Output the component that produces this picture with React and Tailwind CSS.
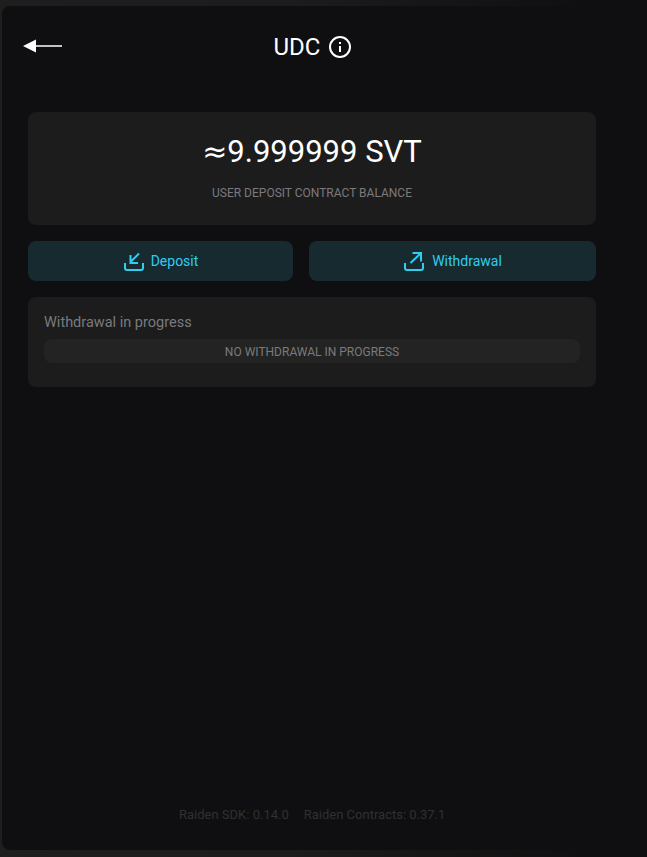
export default function App() {
  return (
    <div className="w-[647px] h-[857px] bg-[linear-gradient(to_right,#1e1e1e_0%,#1c1c1c_45%,#0f0f11_92%)] pt-[6px] pb-[7px] pl-[2px] overflow-hidden" style={{ fontFamily: "Roboto, sans-serif" }}>
      <div className="h-full bg-[#0f0f11] rounded-[8px] flex flex-col relative">
        <div className="h-[80px] relative flex justify-center items-center shrink-0 w-[622px]">
          <svg className="absolute left-[21px] top-[33px]" width="40" height="14" viewBox="0 0 40 14">
            <path d="M0 7 L13 0.5 V6.2 H39 V7.8 H13 V13.5 Z" fill="#fff" />
          </svg>
          <div className="flex items-center mt-[1px]">
            <span className="text-white text-[24px] leading-[28px] font-normal">UDC</span>
            <svg className="ml-[8px]" width="24" height="24" viewBox="0 0 24 24" fill="none">
              <circle cx="12" cy="12" r="10" stroke="#fff" strokeWidth="2" />
              <rect x="11" y="11" width="2" height="6" fill="#fff" />
              <rect x="11" y="7" width="2" height="2" fill="#fff" />
            </svg>
          </div>
        </div>
        <div className="pl-[26px] w-[594px] mt-[26px] flex flex-col gap-[16px]">
          <div className="h-[113px] rounded-[8px] bg-[#1c1c1d] flex flex-col items-center">
            <div className="text-white text-[31px] leading-[38px] mt-[21px] flex items-baseline">
              <span style={{ fontFamily: "'DejaVu Sans', sans-serif" }} className="text-[30px]">≈</span>
              <span>9.999999 SVT</span>
            </div>
            <div className="text-[#7a7a7d] text-[12px] leading-[14px] mt-[15px]">USER DEPOSIT CONTRACT BALANCE</div>
          </div>
          <div className="flex gap-[16px]">
            <button className="w-[265px] h-[40px] rounded-[8px] bg-[#172a30] flex items-center justify-center text-[#2fcdf0] text-[14px]">
              <svg width="24" height="24" viewBox="0 0 24 24" fill="none" stroke="#2fcdf0" strokeWidth="2" className="mr-[4px]">
                <path d="M2 14 V19 a2 2 0 0 0 2 2 H18 a2 2 0 0 0 2 -2 V14" />
                <path d="M16 4.5 L7.5 13 M7.5 6 V14 H15" />
              </svg>
              Deposit
            </button>
            <button className="w-[287px] h-[40px] rounded-[8px] bg-[#172a30] flex items-center justify-center text-[#2fcdf0] text-[14px]">
              <svg width="24" height="24" viewBox="0 0 24 24" fill="none" stroke="#2fcdf0" strokeWidth="2" className="mr-[5px]">
                <path d="M2 14 V19 a2 2 0 0 0 2 2 H18 a2 2 0 0 0 2 -2 V14" />
                <path d="M7.5 14 L17.5 4.5 M9.5 4 H18 V12.5" />
              </svg>
              Withdrawal
            </button>
          </div>
          <div className="h-[90px] rounded-[8px] bg-[#1c1c1d] px-[16px] pt-[17px]">
            <div className="text-[#7a7a7d] text-[14.5px] leading-[18px]">Withdrawal in progress</div>
            <div className="h-[24px] mt-[7px] rounded-[8px] bg-[#232323] flex items-center justify-center text-[#7a7a7d] text-[12px] pt-[2px]">NO WITHDRAWAL IN PROGRESS</div>
          </div>
        </div>
        <div className="mt-auto mb-[27px] pl-[177px] flex gap-[15px] text-[#303032] text-[13px] leading-[16px]">
          <span>Raiden SDK: 0.14.0</span>
          <span>Raiden Contracts: 0.37.1</span>
        </div>
      </div>
    </div>
  );
}
